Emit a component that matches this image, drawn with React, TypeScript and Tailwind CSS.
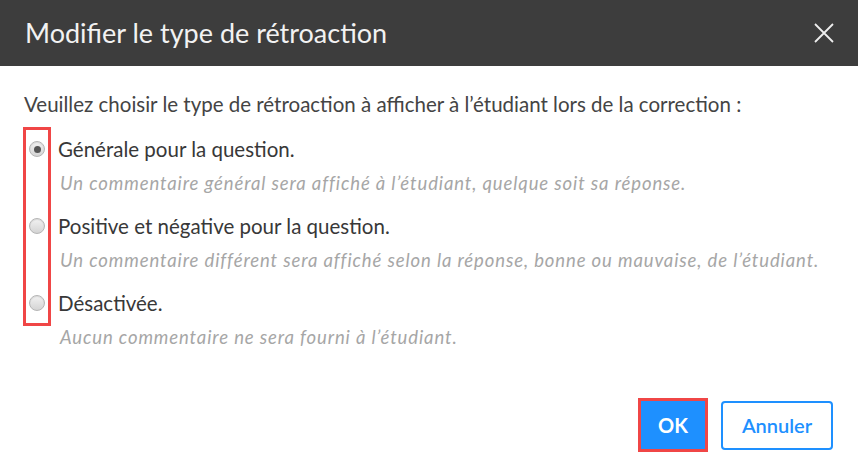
import { useState } from 'react';

const options = [
  {
    label: 'Générale pour la question.',
    hint: 'Un commentaire général sera affiché à l’étudiant, quelque soit sa réponse.',
  },
  {
    label: 'Positive et négative pour la question.',
    hint: 'Un commentaire différent sera affiché selon la réponse, bonne ou mauvaise, de l’étudiant.',
  },
  {
    label: 'Désactivée.',
    hint: 'Aucun commentaire ne sera fourni à l’étudiant.',
  },
];

const Radio = ({ checked }: { checked: boolean }) => (
  <span className="w-[16px] h-[16px] rounded-full border border-[#b5b5b5] bg-gradient-to-b from-[#f2f2f2] to-[#d4d4d4] flex items-center justify-center shadow-[inset_0_1px_1px_rgba(0,0,0,0.1)]">
    {checked && <span className="w-[7px] h-[7px] rounded-full bg-[#555]" />}
  </span>
);

export default function App() {
  const [selected, setSelected] = useState(0);

  return (
    <div className="w-[858px] h-[476px] bg-white font-['Lato',sans-serif] text-[#333]">
      {/* Header */}
      <div className="h-[66px] bg-[#3d3d3d] flex items-center justify-between pl-[25px] pr-[24px]">
        <h1 className="text-[27px] text-[#f2f2f2]">Modifier le type de rétroaction</h1>
        <button aria-label="Fermer" className="text-[#eee]">
          <svg width="20" height="20" viewBox="0 0 20 20" stroke="currentColor" strokeWidth="1.8" fill="none">
            <path d="M1 1l18 18M19 1L1 19" />
          </svg>
        </button>
      </div>

      {/* Body */}
      <div className="pl-[24px] pr-[24px] pt-[26px]">
        <p className="text-[20.5px] leading-[24px] text-[#444]">
          Veuillez choisir le type de rétroaction à afficher à l’étudiant lors de la correction :
        </p>

        <div className="flex mt-[11px]">
          <div className="border-[3px] border-[#f04646] w-[28px] h-[199px] -ml-[1px] flex flex-col items-center pt-[11px] gap-[61px]">
            {options.map((o, i) => (
              <button key={o.label} onClick={() => setSelected(i)} aria-label={o.label}>
                <Radio checked={selected === i} />
              </button>
            ))}
          </div>
          <div className="flex flex-col pl-[7px] pt-[10px] gap-[20px]">
            {options.map((o, i) => (
              <div key={o.label} className="flex flex-col gap-[11px]" onClick={() => setSelected(i)}>
                <span className="text-[20.5px] leading-[24px] text-[#383838]">{o.label}</span>
                <span className="text-[18.5px] leading-[22px] italic text-[#a6a6a6] pl-[2px] tracking-[0.88px]">
                  {o.hint}
                </span>
              </div>
            ))}
          </div>
        </div>

        {/* Footer */}
        <div className="flex justify-end items-center gap-[13px] mt-[50px] pr-[1px]">
          <div className="border-[3px] border-[#f04646]">
            <button className="w-[64px] h-[48px] bg-[#1e90ff] text-white text-[20px] font-bold">OK</button>
          </div>
          <button className="w-[112px] h-[49px] border-2 border-[#1e90ff] rounded-[4px] text-[#1e90ff] text-[20px] font-semibold">
            Annuler
          </button>
        </div>
      </div>
    </div>
  );
}
